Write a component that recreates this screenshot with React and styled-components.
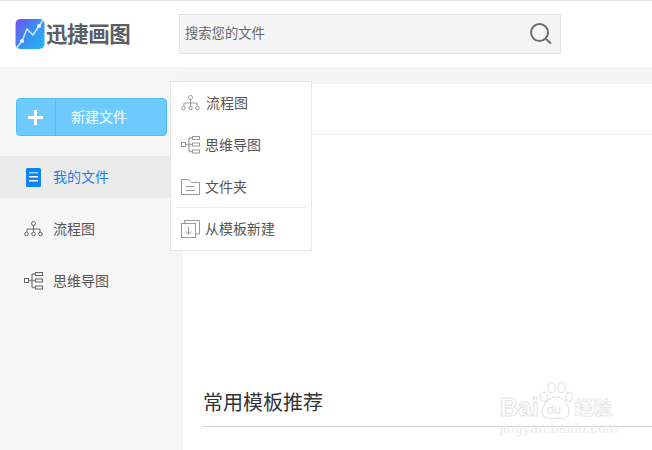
import React from "react";
import styled, { createGlobalStyle } from "styled-components";

const Global = createGlobalStyle`
  html, body { margin: 0; padding: 0; background: #fff; }
  body { font-family: "Noto Sans CJK SC", "Noto Sans", sans-serif; }
  * { box-sizing: border-box; }
`;

const Page = styled.div`
  position: relative;
  width: 652px;
  height: 450px;
  overflow: hidden;
  display: flex;
  flex-direction: column;
  border-top: 1px solid #e6e1db;
`;

const Header = styled.header`
  height: 66px;
  flex: none;
  display: flex;
  align-items: center;
  background: #fff;
  padding-left: 15px;
`;

const Brand = styled.div`
  width: 164px;
  display: flex;
  align-items: center;
  gap: 1px;
  margin-top: -1px;
`;

const BrandName = styled.span`
  font-size: 21.5px;
  font-weight: 700;
  line-height: 30px;
  letter-spacing: -0.4px;
  margin-top: -2px;
  color: #5b5e63;
  white-space: nowrap;
`;

const Search = styled.div`
  width: 382px;
  height: 40px;
  margin-top: -1px;
  display: flex;
  align-items: center;
  justify-content: space-between;
  padding: 0 7px 0 5px;
  background: #f5f5f5;
  border: 1px solid #e4e4e4;
  font-size: 13.3px;
  color: #666;
`;

const Label = styled.span`
  margin-top: -2px;
`;

const Body = styled.div`
  flex: 1;
  display: flex;
  min-height: 0;
  background: #f4f4f4;
`;

const Sidebar = styled.aside`
  width: 183px;
  flex: none;
  padding: 31px 0 0;
  background: #f6f6f6;
`;

const NewButton = styled.div`
  width: 151px;
  height: 38px;
  margin-left: 16px;
  display: flex;
  align-items: center;
  border: 1px solid #52bcf6;
  border-radius: 4px;
  background: #6ecbff;
  color: #fff;
  font-size: 14px;
`;

const PlusCell = styled.div`
  width: 39px;
  height: 100%;
  flex: none;
  margin-right: 15px;
  padding-right: 2px;
  display: flex;
  align-items: center;
  justify-content: center;
  border-right: 1px solid #52bcf6;
`;

const Nav = styled.nav`
  margin-top: 20px;
  display: flex;
  flex-direction: column;
  gap: 10px;
`;

const NavItem = styled.div`
  height: 42px;
  display: flex;
  align-items: center;
  padding-left: ${(p) => (p.$active ? 26 : 24)}px;
  gap: ${(p) => (p.$active ? 12 : 10)}px;
  background: ${(p) => (p.$active ? "#ebebeb" : "transparent")};
  color: ${(p) => (p.$active ? "#1f7fe6" : "#555")};
  font-size: 14px;
  white-space: nowrap;
`;

const Main = styled.main`
  flex: 1;
  margin-top: 17px;
  background: #fff;
  display: flex;
  flex-direction: column;
`;

const Toolbar = styled.div`
  height: 51px;
  flex: none;
  border-bottom: 1px solid #ededed;
`;

const Section = styled.section`
  margin-top: 249px;
  margin-left: 20px;
  height: 43px;
  border-bottom: 1px solid #cfcfcf;
`;

const SectionTitle = styled.h2`
  margin: 0;
  font-size: 20px;
  font-weight: 400;
  line-height: 36px;
  color: #333;
`;

const Dropdown = styled.div`
  position: absolute;
  left: 170px;
  top: 80px;
  width: 142px;
  height: 170px;
  background: #fff;
  border: 1px solid #e6e6e6;
  padding: 0 5px;
`;

const DropItem = styled.div`
  height: 42px;
  display: flex;
  align-items: center;
  gap: ${(p) => p.$gap ?? 5}px;
  padding-left: 5px;
  font-size: 14px;
  color: #555;
  white-space: nowrap;
`;

const DropRule = styled.div`
  height: 1px;
  margin-top: -1px;
  background: #eee;
`;

const Watermark = styled.div`
  position: absolute;
  left: 500px;
  top: 378px;
  width: 130px;
  color: #ececec;
  font-family: "Liberation Sans", sans-serif;
  pointer-events: none;
`;

const MarkRow = styled.div`
  display: flex;
  align-items: flex-end;
  height: 41px;
`;

const MarkBai = styled.span`
  font-size: 25px;
  font-weight: 700;
  line-height: 26px;
  color: #fff;
  -webkit-text-stroke: 1px #e4e4e4;
`;

const MarkJing = styled.span`
  font-size: 19px;
  line-height: 26px;
  margin-left: 1px;
  font-family: "Noto Sans CJK SC", sans-serif;
  font-weight: 700;
  color: #fff;
  -webkit-text-stroke: 0.7px #e4e4e4;
`;

const MarkUrl = styled.div`
  font-size: 14px;
  line-height: 13px;
  margin-top: 2px;
  letter-spacing: 0.3px;
  white-space: nowrap;
`;

const Logo = () => (
  <svg width="30" height="30" viewBox="0 0 30 30">
    <defs>
      <linearGradient id="lg" x1="0" y1="0.1" x2="1" y2="0.9">
        <stop offset="0" stopColor="#6a55f2" />
        <stop offset="0.5" stopColor="#3a8ff2" />
        <stop offset="1" stopColor="#26b6f5" />
      </linearGradient>
    </defs>
    <rect width="29" height="30" x="0.5" rx="5" fill="url(#lg)" />
    <path d="M1.5 29 L7 22 L12 10 L18 16 L24 7 L28 1" fill="none" stroke="#c8e8ff" strokeWidth="1.5" />
    <circle cx="7" cy="22" r="2" fill="#eef8ff" />
    <circle cx="24" cy="7" r="2" fill="#eef8ff" />
  </svg>
);

const SearchIcon = () => (
  <svg width="24" height="24" viewBox="0 0 24 24" fill="none" stroke="#6c6c70">
    <circle cx="10.5" cy="10.5" r="8.5" strokeWidth="1.9" />
    <path d="M17 17l5 4.5" strokeWidth="2" />
  </svg>
);

const Plus = () => (
  <svg width="15" height="15" viewBox="0 0 15 15" fill="#fff">
    <rect x="6" y="0" width="3" height="15" />
    <rect x="0" y="6" width="15" height="3" />
  </svg>
);

const DocIcon = () => (
  <svg width="15" height="19" viewBox="0 0 15 19">
    <rect width="15" height="19" rx="1.5" fill="#0b85f5" />
    <rect x="3" y="4" width="9" height="1.5" fill="#9ed2ff" />
    <rect x="3" y="8" width="9" height="1.5" fill="#fff" />
    <rect x="3" y="12" width="9" height="1.5" fill="#fff" />
  </svg>
);

const FlowIcon = ({ color }) => (
  <svg width="19" height="16" viewBox="0 0 19 16" fill="none" stroke={color} strokeWidth="1">
    <circle cx="9.5" cy="2.5" r="2" />
    <path d="M9.5 4.5V11M3 11V8h13v3" />
    <circle cx="2.5" cy="13" r="1.8" />
    <circle cx="9.5" cy="13" r="1.8" />
    <circle cx="16.5" cy="13" r="1.8" />
  </svg>
);

const MindIcon = ({ color, trunk }) => (
  <svg width="19" height="18" viewBox="0 0 19 18" fill="none" stroke={color} strokeWidth="1">
    <rect x="0.5" y="6.5" width="4" height="4" />
    <rect x="11.5" y="0.5" width="7" height="3" />
    <rect x="11.5" y="7" width="7" height="3" />
    <rect x="11.5" y="14" width="7" height="3" />
    <path d="M4.5 8.5h7M8 2v13.5M8 2h3.5M8 15.5h3.5" stroke={trunk} strokeWidth="1.4" />
  </svg>
);

const FolderIcon = () => (
  <svg width="19" height="16" viewBox="0 0 19 16" fill="none" stroke="#999">
    <path d="M0.5 0.5h7l3 3h8v12h-18z" />
    <path d="M5 7.5h8M5 11.5h9" />
  </svg>
);

const TemplateIcon = () => (
  <svg width="19" height="18" viewBox="0 0 19 18" fill="none" stroke="#999">
    <path d="M3.5 3V0.5h15V14H15" />
    <rect x="0.5" y="3.5" width="14" height="14" />
    <path d="M7.5 7v7M4.8 11.5l2.7 2.7 2.7-2.7" />
  </svg>
);

const Paw = () => (
  <svg width="34" height="38" viewBox="0 0 36 41" fill="#fff" stroke="#e4e4e4" strokeWidth="1.3">
    <ellipse cx="5" cy="16" rx="4" ry="5" />
    <ellipse cx="13" cy="6" rx="4" ry="5.5" />
    <ellipse cx="24" cy="6" rx="4" ry="5.5" />
    <ellipse cx="32" cy="16" rx="3.5" ry="5" />
    <path d="M18 16c7 0 14 8 14 16 0 8-8 8-14 7-6 1-15 1-15-7 0-8 8-16 15-16z" />
    <text x="8" y="34" fontSize="14" fill="#e4e4e4" stroke="none" fontFamily="Liberation Sans">du</text>
  </svg>
);

export default function App() {
  return (
    <Page>
      <Global />
      <Header>
        <Brand>
          <Logo />
          <BrandName>迅捷画图</BrandName>
        </Brand>
        <Search>
          <Label>搜索您的文件</Label>
          <SearchIcon />
        </Search>
      </Header>
      <Body>
        <Sidebar>
          <NewButton>
            <PlusCell>
              <Plus />
            </PlusCell>
            <Label>新建文件</Label>
          </NewButton>
          <Nav>
            <NavItem $active>
              <DocIcon />
              <Label>我的文件</Label>
            </NavItem>
            <NavItem>
              <FlowIcon color="#666" />
              <Label>流程图</Label>
            </NavItem>
            <NavItem>
              <MindIcon color="#666" trunk="#888" />
              <Label>思维导图</Label>
            </NavItem>
          </Nav>
        </Sidebar>
        <Main>
          <Toolbar />
          <Section>
            <SectionTitle>常用模板推荐</SectionTitle>
          </Section>
        </Main>
      </Body>
      <Dropdown>
        <DropItem $gap={6}>
          <FlowIcon color="#999" />
          <Label>流程图</Label>
        </DropItem>
        <DropItem>
          <MindIcon color="#999" trunk="#aaa" />
          <Label>思维导图</Label>
        </DropItem>
        <DropItem>
          <FolderIcon />
          <Label>文件夹</Label>
        </DropItem>
        <DropRule />
        <DropItem>
          <TemplateIcon />
          <Label>从模板新建</Label>
        </DropItem>
      </Dropdown>
      <Watermark>
        <MarkRow>
          <MarkBai>Bai</MarkBai>
          <Paw />
          <MarkJing>经验</MarkJing>
        </MarkRow>
        <MarkUrl>jingyan.baidu.com</MarkUrl>
      </Watermark>
    </Page>
  );
}
